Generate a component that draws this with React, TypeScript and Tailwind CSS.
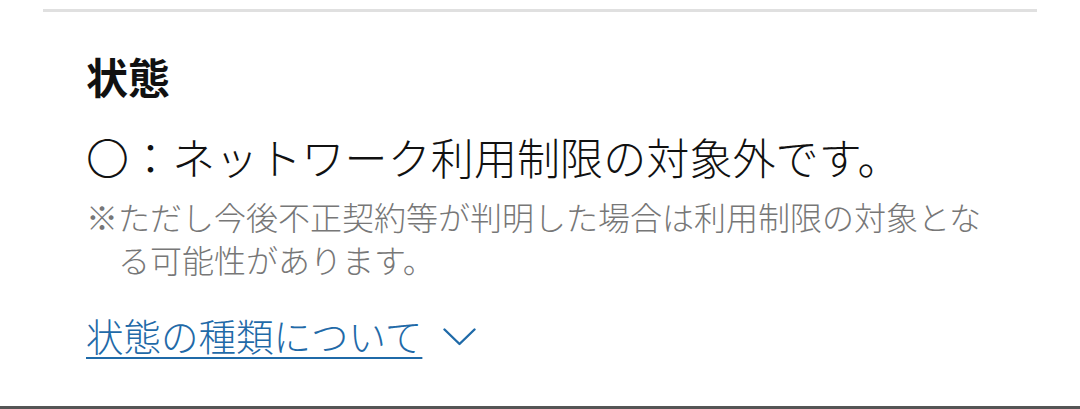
export default function App() {
  return (
    <div className="relative h-[409px] w-[1080px] overflow-hidden bg-white font-['Noto_Sans_CJK_JP','Noto_Sans',sans-serif]">
      <div className="mx-[43px] mt-[9px] h-[3px] bg-[#e0e0e0]" />

      <div className="flex flex-col pl-[86px] pr-[70px]">
        <h2 className="mt-[35px] text-[42px] font-bold leading-[58px] text-[#111]">状態</h2>

        <p className="mt-[21px] text-[43px] font-light leading-[60px] tracking-[0.1px] text-[#111]">
          〇：ネットワーク利用制限の対象外です。
        </p>

        <p className="mt-[9px] pl-[32px] -indent-[32px] text-[32px] font-light leading-[43px] text-[#777]">
          ※ただし今後不正契約等が判明した場合は利用制限の対象となる可能性があります。
        </p>

        <button
          type="button"
          className="mt-[28px] flex items-center gap-[21px] self-start text-[37.5px] font-light leading-[52px] text-[#1f6aa8]"
        >
          <span className="underline decoration-[2px] underline-offset-[6px]">状態の種類について</span>
          <svg width="33" height="18" viewBox="0 0 33 18" fill="none" className="mt-[4px]">
            <polyline
              points="1.5,1.5 16.5,16 31.5,1.5"
              stroke="currentColor"
              strokeWidth="2.4"
              strokeLinecap="round"
              strokeLinejoin="round"
            />
          </svg>
        </button>
      </div>

      <div className="absolute bottom-0 left-0 h-[3px] w-full bg-[#555]" />
    </div>
  );
}
